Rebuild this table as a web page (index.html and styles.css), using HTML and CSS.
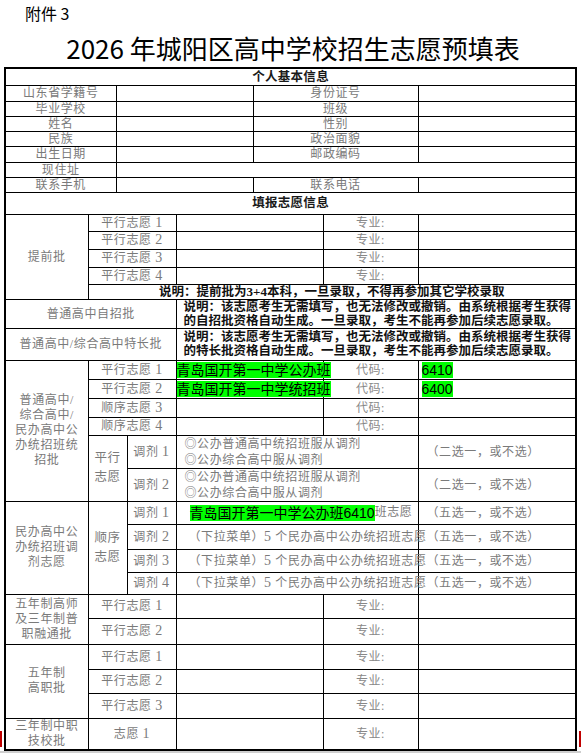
FILE: index.html
```html
<!DOCTYPE html>
<html lang="zh-CN">
<head>
<meta charset="utf-8">
<title>2026 年城阳区高中学校招生志愿预填表</title>
<link rel="stylesheet" href="styles.css">
</head>
<body>
<div class="page">
  <div class="annex">附件 3</div>
  <h1 class="title">2026 年城阳区高中学校招生志愿预填表</h1>
  <table class="form">
    <colgroup>
      <col class="c1"><col class="c2"><col class="c3"><col class="c4"><col class="c5"><col class="c6"><col class="c7"><col class="c8">
    </colgroup>
    <tbody>
      <tr class="h17"><td colspan="8" class="head">个人基本信息</td></tr>
      <tr class="h16"><td colspan="2">山东省学籍号</td><td colspan="3"></td><td colspan="2">身份证号</td><td></td></tr>
      <tr class="h15"><td colspan="2">毕业学校</td><td colspan="3"></td><td colspan="2">班级</td><td></td></tr>
      <tr class="h15"><td colspan="2">姓名</td><td colspan="3"></td><td colspan="2">性别</td><td></td></tr>
      <tr class="h15"><td colspan="2">民族</td><td colspan="3"></td><td colspan="2">政治面貌</td><td></td></tr>
      <tr class="h16"><td colspan="2">出生日期</td><td colspan="3"></td><td colspan="2">邮政编码</td><td></td></tr>
      <tr class="h15"><td colspan="2">现住址</td><td colspan="6"></td></tr>
      <tr class="h15"><td colspan="2">联系手机</td><td colspan="3"></td><td colspan="2">联系电话</td><td></td></tr>

      <tr class="h22"><td colspan="8" class="head">填报志愿信息</td></tr>
      <tr class="h17"><td rowspan="5">提前批</td><td colspan="3">平行志愿 <span class="n">1</span></td><td colspan="2"></td><td class="key">专业:</td><td></td></tr>
      <tr class="h18"><td colspan="3">平行志愿 <span class="n">2</span></td><td colspan="2"></td><td class="key">专业:</td><td></td></tr>
      <tr class="h18"><td colspan="3">平行志愿 <span class="n">3</span></td><td colspan="2"></td><td class="key">专业:</td><td></td></tr>
      <tr class="h17"><td colspan="3">平行志愿 <span class="n">4</span></td><td colspan="2"></td><td class="key">专业:</td><td></td></tr>
      <tr class="h15"><td colspan="7" class="note center">说明：提前批为<span class="n">3+4</span>本科，一旦录取，不得再参加其它学校录取</td></tr>

      <tr class="h29"><td colspan="4">普通高中自招批</td><td colspan="4" class="note">说明：该志愿考生无需填写，也无法修改或撤销。由系统根据考生获得<br>的自招批资格自动生成。一旦录取，考生不能再参加后续志愿录取。</td></tr>
      <tr class="h32"><td colspan="4">普通高中/综合高中特长批</td><td colspan="4" class="note">说明：该志愿考生无需填写，也无法修改或撤销。由系统根据考生获得<br>的特长批资格自动生成。一旦录取，考生不能再参加后续志愿录取。</td></tr>

      <tr class="h19"><td rowspan="6" class="multi">普通高中/<br>综合高中/<br>民办高中公<br>办统招班统<br>招批</td><td colspan="3">平行志愿 <span class="n">1</span></td><td colspan="2" class="pick"><span class="hl">青岛国开第一中学公办班</span></td><td class="key">代码:</td><td class="code"><span class="hl">6410</span></td></tr>
      <tr class="h19"><td colspan="3">平行志愿 <span class="n">2</span></td><td colspan="2" class="pick"><span class="hl">青岛国开第一中学统招班</span></td><td class="key">代码:</td><td class="code"><span class="hl">6400</span></td></tr>
      <tr class="h19"><td colspan="3">顺序志愿 <span class="n">3</span></td><td colspan="2"></td><td class="key">代码:</td><td></td></tr>
      <tr class="h18"><td colspan="3">顺序志愿 <span class="n">4</span></td><td colspan="2"></td><td class="key">代码:</td><td></td></tr>
      <tr class="h33"><td colspan="2" rowspan="2" class="tall">平行<br>志愿</td><td>调剂 <span class="n">1</span></td><td colspan="3" class="opt">◎公办普通高中统招班服从调剂<br>◎公办综合高中服从调剂</td><td class="opt">（二选一，或不选）</td></tr>
      <tr class="h33"><td>调剂 <span class="n">2</span></td><td colspan="3" class="opt">◎公办普通高中统招班服从调剂<br>◎公办综合高中服从调剂</td><td class="opt">（二选一，或不选）</td></tr>

      <tr class="h23"><td rowspan="4" class="multi">民办高中公<br>办统招班调<br>剂志愿</td><td colspan="2" rowspan="4" class="tall">顺序<br>志愿</td><td>调剂 <span class="n">1</span></td><td colspan="3" class="opt wide"><span class="hl">青岛国开第一中学公办班6410</span>班志愿</td><td class="opt">（五选一，或不选）</td></tr>
      <tr class="h25"><td>调剂 <span class="n">2</span></td><td colspan="3" class="opt wide">（下拉菜单）<span class="n">5</span> 个民办高中公办统招班志愿</td><td class="opt">（五选一，或不选）</td></tr>
      <tr class="h23"><td>调剂 <span class="n">3</span></td><td colspan="3" class="opt wide">（下拉菜单）<span class="n">5</span> 个民办高中公办统招班志愿</td><td class="opt">（五选一，或不选）</td></tr>
      <tr class="h22"><td>调剂 <span class="n">4</span></td><td colspan="3" class="opt wide">（下拉菜单）<span class="n">5</span> 个民办高中公办统招班志愿</td><td class="opt">（五选一，或不选）</td></tr>

      <tr class="h24"><td rowspan="2" class="multi">五年制高师<br>及三年制普<br>职融通批</td><td colspan="3">平行志愿 <span class="n">1</span></td><td colspan="2"></td><td class="key">专业:</td><td></td></tr>
      <tr class="h26"><td colspan="3">平行志愿 <span class="n">2</span></td><td colspan="2"></td><td class="key">专业:</td><td></td></tr>
      <tr class="h25"><td rowspan="3" class="multi">五年制<br>高职批</td><td colspan="3">平行志愿 <span class="n">1</span></td><td colspan="2"></td><td class="key">专业:</td><td></td></tr>
      <tr class="h24"><td colspan="3">平行志愿 <span class="n">2</span></td><td colspan="2"></td><td class="key">专业:</td><td></td></tr>
      <tr class="h25"><td colspan="3">平行志愿 <span class="n">3</span></td><td colspan="2"></td><td class="key">专业:</td><td></td></tr>
      <tr class="h29"><td class="multi">三年制中职<br>技校批</td><td colspan="3">志愿 <span class="n">1</span></td><td colspan="2"></td><td class="key">专业:</td><td></td></tr>
    </tbody>
  </table>
</div>
</body>
</html>
```

FILE: styles.css
```css
* { box-sizing: border-box; }
html, body { margin: 0; padding: 0; background: #fff; }
body { font-family: "Noto Sans CJK SC", sans-serif; color: #000; }

.page {
  position: relative;
  width: 581px;
  height: 753px;
  border-bottom: 2px solid #cfcfcf;
  overflow: hidden;
}
.page::before,
.page::after {
  content: "";
  position: absolute;
  top: 731px;
  width: 2px;
  height: 16px;
  background: #c00000;
}
.page::before { left: 0; }
.page::after { right: 0; }

.annex {
  height: 22px;
  padding: 3px 0 0 25px;
  font-size: 16px;
  line-height: 20px;
}
.title {
  margin: 11px 0 4px;
  padding-left: 5px;
  text-align: center;
  font-size: 26px;
  line-height: 30px;
  font-weight: 400;
}

.form {
  margin-left: 4px;
  width: 571px;
  table-layout: fixed;
  border-collapse: collapse;
  border: 2px solid #000;
}
.c1 { width: 83px; }
.c2 { width: 28px; }
.c3 { width: 11px; }
.c4 { width: 49px; }
.c5 { width: 77px; }
.c6 { width: 70px; }
.c7 { width: 95px; }
.c8 { width: 158px; }

.form td {
  border: 1px solid #000;
  padding: 0;
  font-family: "Liberation Serif", "Noto Sans CJK SC", serif;
  font-size: 12px;
  line-height: 14px;
  color: #7a7a7a;
  letter-spacing: 0.6px;
  text-align: center;
  vertical-align: middle;
  white-space: nowrap;
  overflow: visible;
}
.form td.head {
  color: #1a1a1a;
  font-weight: 700;
  font-size: 12.5px;
  letter-spacing: 0.3px;
}
.form td.note {
  color: #111;
  font-weight: 700;
  font-size: 12.5px;
  letter-spacing: 0;
  line-height: 14px;
  text-align: left;
  padding-left: 7px;
}
.form td.note.center { text-align: center; padding-left: 0; }
.form td.multi { line-height: 15px; }
.form td.tall { line-height: 19px; font-size: 12.5px; }
.form td.opt {
  text-align: left;
  padding-left: 8px;
  line-height: 16px;
}
.form td.opt.wide { padding-left: 12px; }
.form td.pick { text-align: left; }
.form td.code { text-align: left; padding-left: 3px; }
.form td.key { color: #888; }

.n {
  font-family: "Liberation Serif", serif;
  font-size: 14px;
  line-height: 1;
}
.note .n { font-size: 13px; }

.hl {
  display: inline-block;
  background: #00ff00;
  color: #000;
  font-family: "Liberation Sans", "Noto Sans CJK SC", sans-serif;
  font-size: 14px;
  line-height: 16px;
  letter-spacing: 0;
  vertical-align: middle;
}
.opt .hl { margin-left: 1px; }

.h15 { height: 15px; }
.h16 { height: 16px; }
.h17 { height: 17px; }
.h18 { height: 18px; }
.h19 { height: 19px; }
.h22 { height: 22px; }
.h23 { height: 23px; }
.h24 { height: 24px; }
.h25 { height: 25px; }
.h26 { height: 26px; }
.h29 { height: 29px; }
.h32 { height: 32px; }
.h33 { height: 33px; }
```
